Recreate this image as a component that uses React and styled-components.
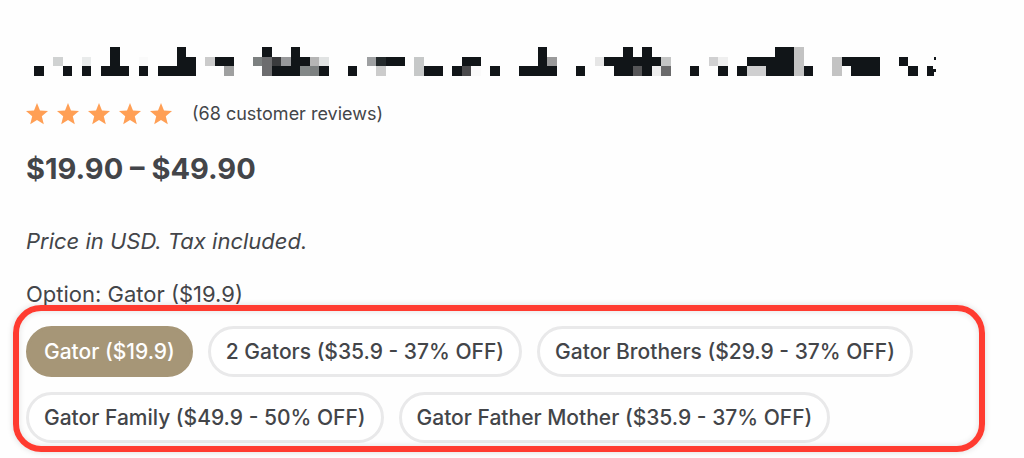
import { useState } from 'react'
import styled, { createGlobalStyle } from 'styled-components'

const COLORS = {
    TEXT: '#434549',
    INK: '#111518',
    STAR: '#ff9f55',
    TAN: '#a69677',
    BORDER: '#e9e9ea',
    RED: '#ff3b30',
}

const OPTIONS = [
    { name: 'Gator', price: '$19.9' },
    { name: '2 Gators', price: '$35.9 - 37% OFF' },
    { name: 'Gator Brothers', price: '$29.9 - 37% OFF' },
    { name: 'Gator Family', price: '$49.9 - 50% OFF' },
    { name: 'Gator Father Mother', price: '$35.9 - 37% OFF' },
]

// [column, row, columns wide, fill]
const BLOCKS = [
    [0, 2, 1], [2, 1, 1, '#d0d2d2'], [3, 2, 1], [5, 1, 1, '#e9ebeb'], [5, 2, 1],
    [8, 0, 1], [8, 1, 1], [7, 2, 3], [11, 1, 1, '#fafafa'], [11, 2, 1],
    [15, 0, 1], [15, 1, 2], [13, 2, 4], [18, 1, 1, '#cbcbcb'], [19, 1, 2], [20, 2, 1, '#9fa0a0'],
    [24, 0, 1], [27, 0, 1], [23, 1, 1, '#7c8080'], [24, 1, 1, '#6c6c6e'], [25, 1, 1, '#3a3b3d'],
    [26, 1, 1, '#98999b'], [27, 1, 2], [29, 1, 1, '#b5b5b5'], [30, 1, 1, '#e1e3e3'],
    [24, 2, 1, '#6c6c6e'], [25, 2, 3], [28, 2, 1, '#838888'], [29, 2, 1, '#7c8080'], [30, 2, 1],
    [33, 2, 1], [35, 1, 1, '#9ea0a2'], [36, 1, 1, '#242a2c'], [37, 1, 2], [36, 2, 1, '#cccccc'],
    [40, 1, 1, '#c6c8c8'], [40, 2, 1, '#c6c8c8'], [41, 2, 2],
    [45, 1, 2], [44, 2, 1], [45, 2, 1, '#4a4a4c'], [46, 2, 1, '#fafafa'], [48, 2, 1],
    [53, 0, 1], [53, 1, 1], [54, 1, 1, '#9a9a9b'], [51, 2, 4], [57, 2, 1],
    [62, 0, 1], [64, 0, 1], [59, 1, 1, '#e6e6e6'], [60, 1, 6], [66, 1, 1, '#c4c5c5'],
    [61, 2, 2], [63, 2, 1, '#565658'], [64, 2, 1], [65, 2, 1, '#eeeeee'], [66, 2, 1, '#6a6a6b'],
    [69, 2, 1], [71, 1, 1, '#d0d0d1'], [72, 1, 1, '#efefef'], [72, 2, 1],
    [78, 0, 2], [75, 1, 5], [74, 2, 1], [75, 2, 2, '#cfcfd0'], [77, 2, 3],
    [80, 0, 1, '#c3c3c3'], [80, 1, 1, '#c3c3c3'], [80, 2, 1, '#c3c3c3'], [81, 2, 1],
    [84, 1, 1, '#c3c3c3'], [84, 2, 1, '#c3c3c3'], [85, 1, 4], [86, 2, 3],
    [91, 1, 1], [92, 2, 1],
]

const GlobalStyle = createGlobalStyle`
    *, *::before {
        box-sizing: border-box;
    }

    body {
        margin: 0;
        background: #fefefe;
        color: ${COLORS.TEXT};
        font-family: Inter, "Liberation Sans", sans-serif;
    }
`

const Product = styled.main`
    padding: 47px 26px 15px;
`

const Title = styled.h1`
    margin: 0;
    padding-left: 8px;
    line-height: 0;
`

const TitleBlocks = styled.svg`
    width: 903px;
    max-width: 100%;
    height: auto;
`

const Rating = styled.div`
    display: flex;
    align-items: center;
    gap: 20px;
    margin-top: 26px;
`

const Stars = styled.div`
    display: flex;
    gap: 9px;
`

const Star = styled.svg`
    width: 22px;
    height: 22px;
    fill: ${COLORS.STAR};
`

const Reviews = styled.a`
    color: inherit;
    font-size: 18px;
    line-height: 24px;
    text-decoration: none;
`

const Price = styled.p`
    margin: 25px 0 0;
    font-size: 29px;
    font-weight: 700;
    line-height: 36px;
`

const TaxNote = styled.p`
    margin: 40px 0 0;
    font-size: 22px;
    font-style: italic;
    line-height: 28px;
`

const OptionLabel = styled.p`
    margin: 24px 0 0;
    font-size: 22px;
    line-height: 30px;
`

const OptionGroup = styled.div`
    position: relative;
    display: flex;
    flex-wrap: wrap;
    gap: 15px;
    margin-top: 17px;

    &::before {
        content: '';
        position: absolute;
        inset: -21px 13px -9px -13px;
        border: 6px solid ${COLORS.RED};
        border-radius: 28px;
        box-shadow: 0 0 6px rgba(0, 0, 0, 0.15), inset 0 0 6px rgba(0, 0, 0, 0.12);
        pointer-events: none;
    }
`

const OptionButton = styled.button`
    height: 51px;
    padding: 0 15px;
    border: 3px solid ${({ $active }) => ($active ? COLORS.TAN : COLORS.BORDER)};
    border-radius: 26px;
    background: ${({ $active }) => ($active ? COLORS.TAN : '#fff')};
    color: ${({ $active }) => ($active ? '#fff' : COLORS.TEXT)};
    font-family: inherit;
    font-size: 21px;
    font-weight: 500;
    white-space: nowrap;
    cursor: pointer;
`

const App = () => {
    const [selected, setSelected] = useState(OPTIONS[0])

    return (
        <Product>
            <GlobalStyle />
            <Title>
                <TitleBlocks viewBox="0 0 95 3" shapeRendering="crispEdges" aria-hidden="true">
                    {BLOCKS.map(([x, y, width, fill = COLORS.INK]) => (
                        <rect key={`${x}-${y}`} x={x} y={y} width={width} height="1" fill={fill} />
                    ))}
                    <path d="M94 2h.6v.3h.3v.3h-.2v.4H94zM94.7 1.1h.2v.25h-.2z" fill={COLORS.INK} />
                </TitleBlocks>
            </Title>
            <Rating>
                <Stars role="img" aria-label="5 out of 5">
                    {[1, 2, 3, 4, 5].map((n) => (
                        <Star key={n} viewBox="0 0 22 22">
                            <path d="M11 0l3 7.6 8 .5-6.2 5.2 2 7.9L11 16.9l-6.8 4.3 2-7.9L0 8.1l8-.5z" />
                        </Star>
                    ))}
                </Stars>
                <Reviews href="#reviews">(68 customer reviews)</Reviews>
            </Rating>
            <Price>$19.90 – $49.90</Price>
            <TaxNote>Price in USD. Tax included.</TaxNote>
            <OptionLabel>{`Option: ${selected.name} (${selected.price})`}</OptionLabel>
            <OptionGroup role="group" aria-label="Option">
                {OPTIONS.map((option) => (
                    <OptionButton
                        key={option.name}
                        type="button"
                        $active={option === selected}
                        aria-pressed={option === selected}
                        onClick={() => setSelected(option)}
                    >
                        {`${option.name} (${option.price})`}
                    </OptionButton>
                ))}
            </OptionGroup>
        </Product>
    )
}

export default App
